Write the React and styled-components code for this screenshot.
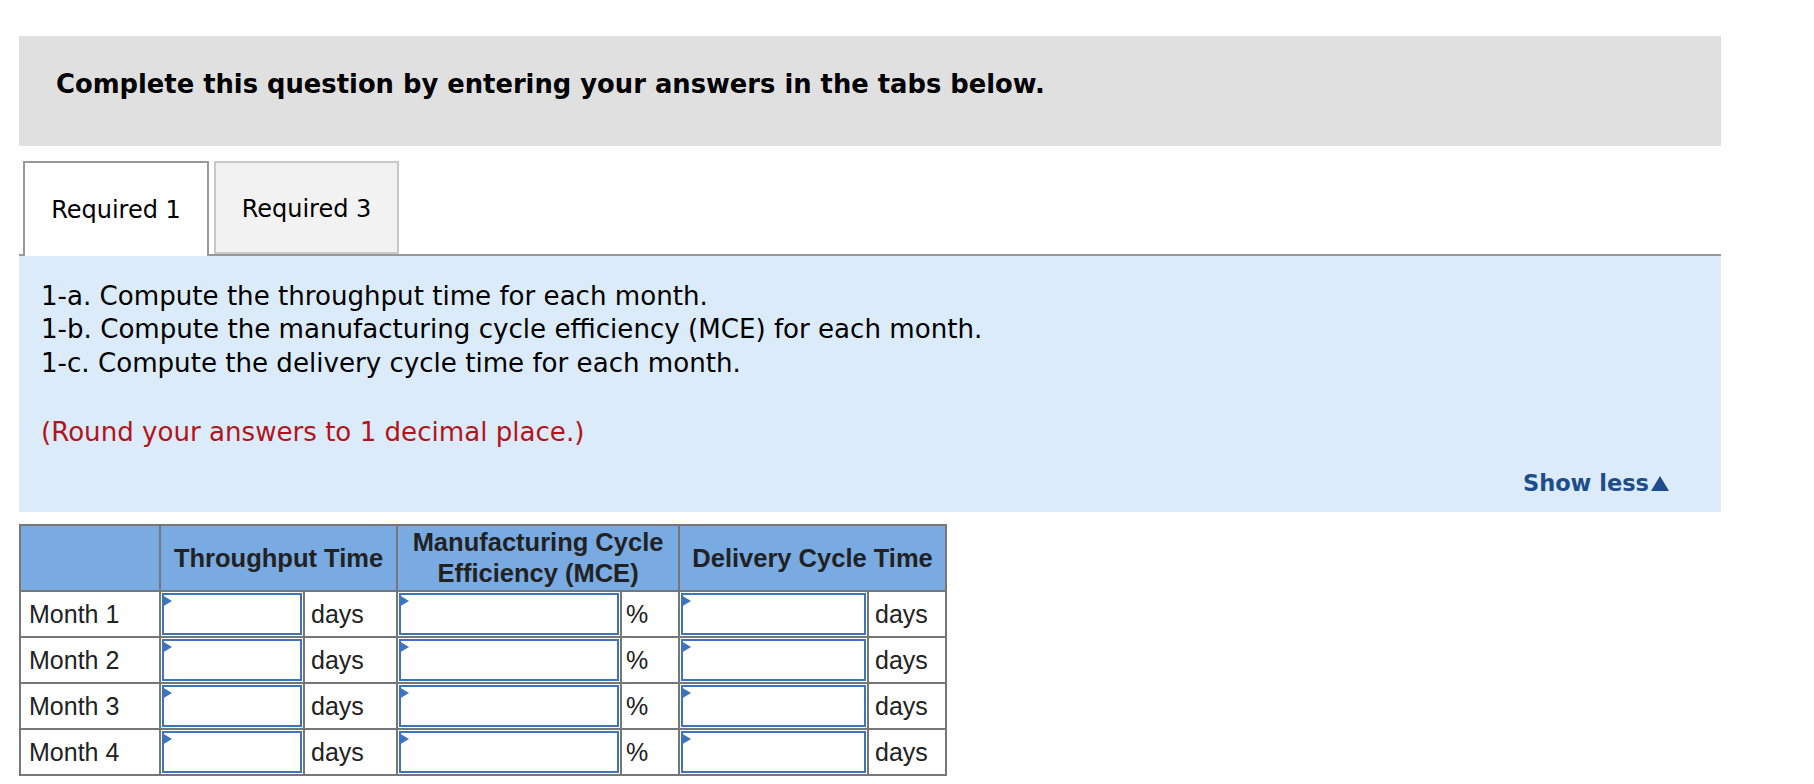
import React from "react";
import styled, { createGlobalStyle } from "styled-components";

const GlobalStyle = createGlobalStyle`
  body {
    margin: 0;
    background: #ffffff;
  }
`;

const Page = styled.div`
  width: 1702px;
  padding: 36px 0 0 19px;
  font-family: "DejaVu Sans", Verdana, sans-serif;
  color: #000;
`;

const Banner = styled.div`
  box-sizing: border-box;
  height: 110px;
  padding: 33px 0 0 37px;
  background: #e0e0e0;
`;

const BannerTitle = styled.h2`
  margin: 0;
  font-size: 25.8px;
  line-height: 30px;
  font-weight: 700;
`;

const TabBar = styled.div`
  display: flex;
  align-items: flex-end;
  gap: 5px;
  height: 93px;
  margin-top: 15px;
  padding-left: 4px;
  border-bottom: 2px solid #999;
`;

const Tab = styled.div`
  box-sizing: border-box;
  display: flex;
  align-items: center;
  justify-content: center;
  width: ${({ $width }) => $width}px;
  height: ${({ $active }) => ($active ? "95px" : "93px")};
  margin-bottom: ${({ $active }) => ($active ? "-2px" : "0")};
  border: 2px solid ${({ $active }) => ($active ? "#999" : "#c8c8c8")};
  border-bottom: ${({ $active }) => ($active ? "none" : "2px solid #c8c8c8")};
  background: ${({ $active }) => ($active ? "#fff" : "#f2f2f2")};
  font-size: 24px;
  padding-top: ${({ $active }) => ($active ? "0" : "3px")};
`;

const Panel = styled.div`
  padding: 24px 52px 16px 22px;
  background: #dbebf9;
  font-size: 26.1px;
  line-height: 33.4px;
`;

const Step = styled.p`
  margin: 0;
`;

const Note = styled.p`
  margin: 35.6px 0 0;
  color: #b3141c;
`;

const ShowRow = styled.div`
  display: flex;
  justify-content: flex-end;
  margin-top: 21px;
`;

const ShowLess = styled.a`
  display: flex;
  align-items: flex-end;
  gap: 2px;
  font-size: 22.5px;
  line-height: 26px;
  font-weight: 700;
  color: #1d4d8a;
  cursor: pointer;
`;

const Arrow = styled.span`
  width: 0;
  height: 0;
  margin-bottom: 5px;
  border-left: 9.5px solid transparent;
  border-right: 9.5px solid transparent;
  border-bottom: 15px solid #1d4d8a;
`;

const Grid = styled.table`
  width: 926px;
  margin-top: 12px;
  border-collapse: collapse;
  table-layout: fixed;
  font-family: "Liberation Sans", Arial, sans-serif;
  color: #222;
`;

const Col = styled.col`
  width: ${({ $w }) => $w}px;
`;

const HeadCell = styled.th`
  height: 60px;
  padding: 1px 4px;
  border: 2px solid #777;
  background: #79abe2;
  font-size: 25.5px;
  line-height: 31px;
  font-weight: 700;
  text-align: center;
`;

const TextCell = styled.td`
  padding: 0 ${({ $pad }) => $pad}px;
  border: 2px solid #777;
  font-size: 25px;
  line-height: 30px;
  text-align: left;
  white-space: nowrap;
`;

const InputCell = styled.td`
  position: relative;
  padding: 1px;
  border: 2px solid #777;

  &::before {
    content: "";
    position: absolute;
    top: 3px;
    left: 1px;
    border-left: 10px solid #3d74bd;
    border-top: 6px solid transparent;
    border-bottom: 6px solid transparent;
  }
`;

const Answer = styled.input`
  display: block;
  box-sizing: border-box;
  width: 100%;
  height: 42px;
  margin: 0;
  border: 2px solid #3d74bd;
  background: #fff;
  outline: none;
`;

const months = ["Month 1", "Month 2", "Month 3", "Month 4"];
const units = ["days", "%", "days"];
const widths = [140, 144, 93, 224, 58, 189, 78];

export default function App() {
  return (
    <>
      <GlobalStyle />
      <Page>
        <Banner>
          <BannerTitle>
            Complete this question by entering your answers in the tabs below.
          </BannerTitle>
        </Banner>

        <TabBar>
          <Tab $active $width={186}>Required 1</Tab>
          <Tab $width={185}>Required 3</Tab>
        </TabBar>

        <Panel>
          <Step>1-a. Compute the throughput time for each month.</Step>
          <Step>
            1-b. Compute the manufacturing cycle efficiency (MCE) for each
            month.
          </Step>
          <Step>1-c. Compute the delivery cycle time for each month.</Step>
          <Note>(Round your answers to 1 decimal place.)</Note>
          <ShowRow>
            <ShowLess>
              Show less
              <Arrow />
            </ShowLess>
          </ShowRow>
        </Panel>

        <Grid>
          <colgroup>
            {widths.map((w, i) => (
              <Col key={i} $w={w} />
            ))}
          </colgroup>
          <thead>
            <tr>
              <HeadCell />
              <HeadCell colSpan={2}>Throughput Time</HeadCell>
              <HeadCell colSpan={2}>
                Manufacturing Cycle
                <br />
                Efficiency (MCE)
              </HeadCell>
              <HeadCell colSpan={2}>Delivery Cycle Time</HeadCell>
            </tr>
          </thead>
          <tbody>
            {months.map((m) => (
              <tr key={m}>
                <TextCell $pad={8}>{m}</TextCell>
                {units.map((u, i) => (
                  <React.Fragment key={i}>
                    <InputCell>
                      <Answer type="text" aria-label={`${m} ${u}`} />
                    </InputCell>
                    <TextCell $pad={u === "%" ? 4 : 6}>{u}</TextCell>
                  </React.Fragment>
                ))}
              </tr>
            ))}
          </tbody>
        </Grid>
      </Page>
    </>
  );
}
